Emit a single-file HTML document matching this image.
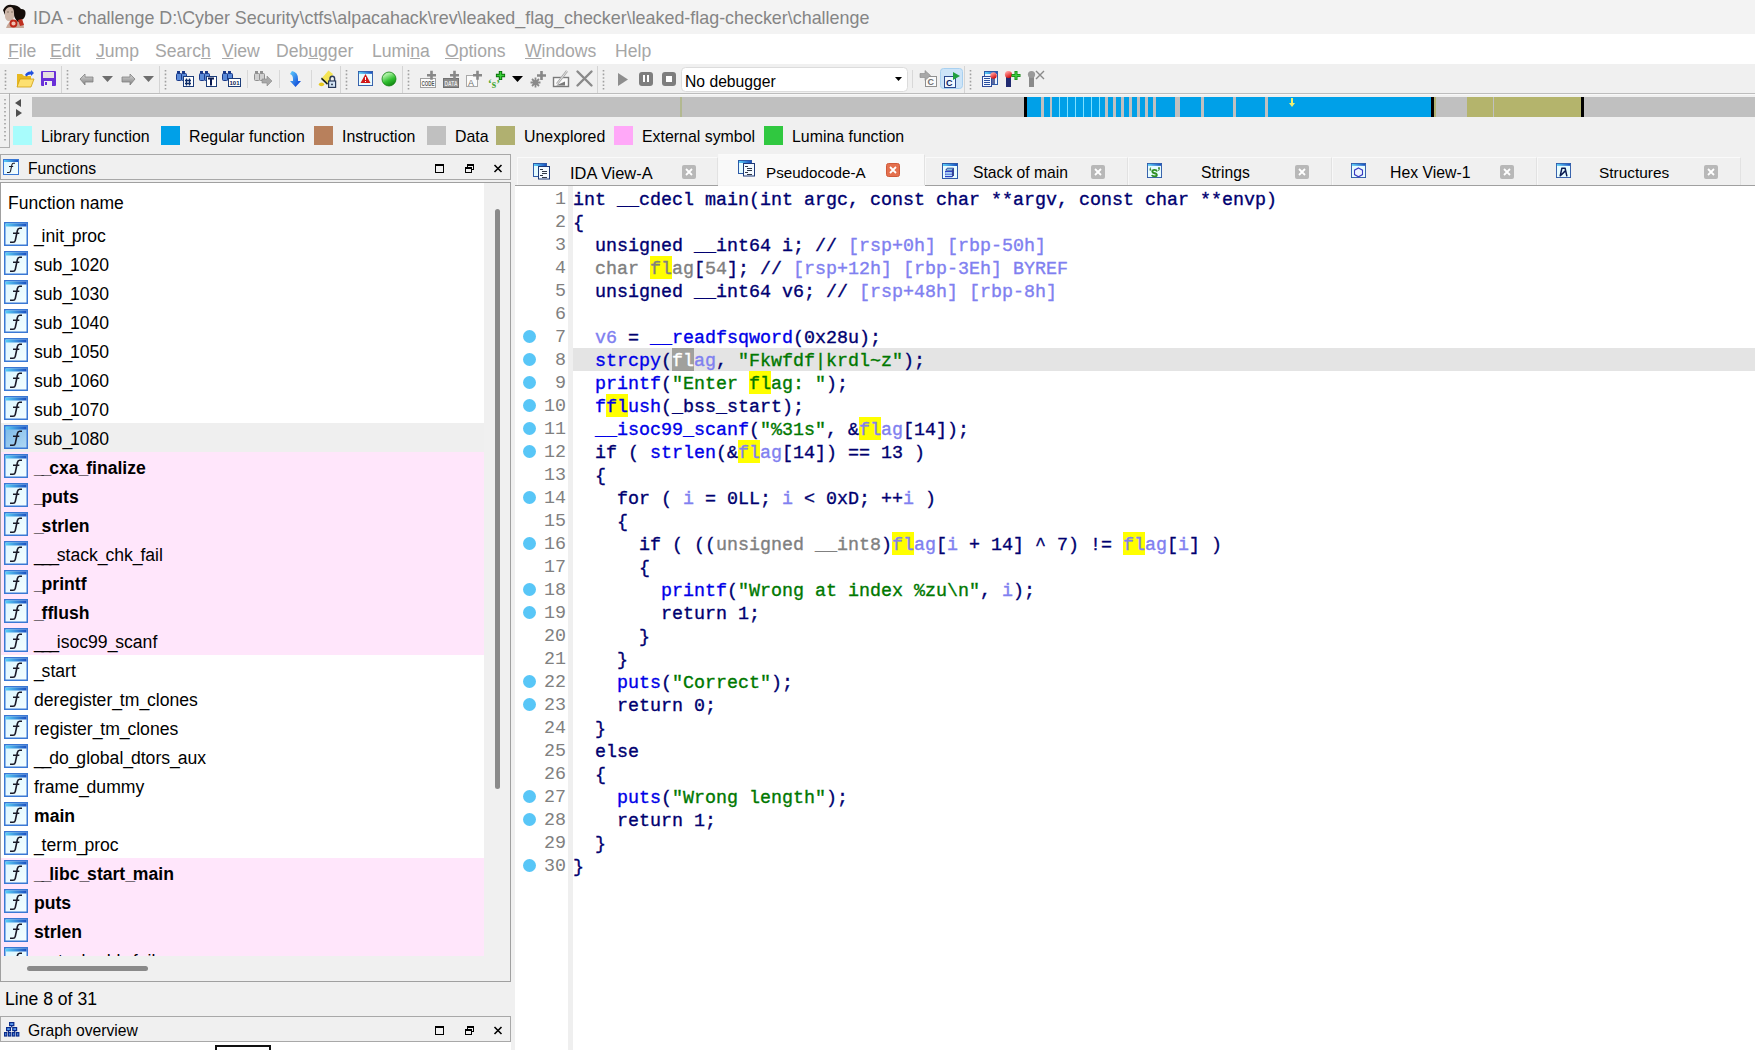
<!DOCTYPE html><html><head><meta charset="utf-8"><style>
*{margin:0;padding:0;box-sizing:border-box}
html,body{width:1755px;height:1050px;overflow:hidden;background:#f0f0f0;font-family:"Liberation Sans",sans-serif;color:#000}
.a{position:absolute}
.t{position:absolute;white-space:pre;line-height:1}
.mi{position:absolute;top:43px;font-size:17.6px;color:#a6a6a6;white-space:pre;line-height:17px}
.mi u{text-decoration:underline;text-decoration-color:#a8a8a8;text-underline-offset:0.5px}
.code{position:absolute;left:573px;font-family:"Liberation Mono",monospace;font-size:18.333px;white-space:pre;line-height:23px;color:#000070;-webkit-text-stroke:0.35px currentColor}
.ln{position:absolute;left:515px;width:51px;text-align:right;font-family:"Liberation Mono",monospace;font-size:18.333px;white-space:pre;line-height:23px;color:#808080}
.dot{position:absolute;left:523px;width:13px;height:13px;border-radius:50%;background:#58c6f7}
.b{color:#0000e8}.g{color:#007800}.l{color:#8080f0}.y{color:#808080}
.hg{color:#fff}
.fr{position:absolute;left:0;width:484px;height:29px}
.fn i{font-style:normal;letter-spacing:-2.2px}
.fn{position:absolute;left:33px;top:2px;font-size:17.6px;white-space:pre;line-height:29px;color:#000}
.fi{position:absolute;left:3px;top:2px;width:24px;height:24px}
.sw{position:absolute;top:126px;width:19px;height:19px}
.lg{position:absolute;top:129px;font-size:15.9px;line-height:16px;white-space:pre;color:#000}
.tab{position:absolute;top:165px;font-size:16px;line-height:16px;white-space:pre;color:#000}
.cb{position:absolute;width:14px;height:14px;border-radius:2px;background:#b4b4b4}
</style></head><body>
<svg width="0" height="0" style="position:absolute"><defs>
<linearGradient id="fig" x1="0" y1="0" x2="1" y2="1"><stop offset="0" stop-color="#dcf6ff"/><stop offset="1" stop-color="#f4feff"/></linearGradient>
<linearGradient id="figs" x1="0" y1="0" x2="1" y2="1"><stop offset="0" stop-color="#7ab8e8"/><stop offset="1" stop-color="#b0d8f4"/></linearGradient>
<linearGradient id="wtop" x1="0" y1="0" x2="1" y2="0"><stop offset="0" stop-color="#5ad0f8"/><stop offset="1" stop-color="#1a50c0"/></linearGradient>
<linearGradient id="gball" x1="0.3" y1="0.2" x2="0.7" y2="1"><stop offset="0" stop-color="#a8f0a0"/><stop offset="0.5" stop-color="#30c030"/><stop offset="1" stop-color="#108010"/></linearGradient>
<linearGradient id="garr" x1="0" y1="0" x2="0" y2="1"><stop offset="0" stop-color="#d8d8d8"/><stop offset="1" stop-color="#808080"/></linearGradient>
<linearGradient id="barr" x1="0" y1="0" x2="1" y2="1"><stop offset="0" stop-color="#60d0ff"/><stop offset="1" stop-color="#0030d0"/></linearGradient>
<linearGradient id="rpin" x1="0.3" y1="0.2" x2="0.7" y2="1"><stop offset="0" stop-color="#ff9090"/><stop offset="1" stop-color="#d00000"/></linearGradient>
<symbol id="ficon" viewBox="0 0 24 24"><rect x="0.75" y="0.75" width="22.5" height="22.5" fill="url(#fig)" stroke="#3a78d4" stroke-width="1.5"/><rect x="1.5" y="1.5" width="21" height="3" fill="url(#wtop)"/><path d="M18 6.3H15.6Q13.9 6.3 13.4 8.5L11.3 18.3Q10.9 20.2 9 20.2H6M9 11.3H15.3" fill="none" stroke="#1a1a28" stroke-width="1.6"/></symbol>
<symbol id="ficons" viewBox="0 0 24 24"><rect x="0.75" y="0.75" width="22.5" height="22.5" fill="url(#figs)" stroke="#3a78d4" stroke-width="1.5"/><rect x="1.5" y="1.5" width="21" height="3" fill="url(#wtop)"/><path d="M18 6.3H15.6Q13.9 6.3 13.4 8.5L11.3 18.3Q10.9 20.2 9 20.2H6M9 11.3H15.3" fill="none" stroke="#1a1a28" stroke-width="1.6"/></symbol>
<symbol id="win" viewBox="0 0 16 16"><rect x="0.5" y="0.5" width="15" height="15" fill="#e8fcff" stroke="#2e5aa8"/><rect x="1" y="1" width="14" height="2" fill="url(#wtop)"/></symbol>
<symbol id="grip" viewBox="0 0 4 22"><path d="M1.5 1v20" stroke="#a0a0a0" stroke-width="1.6" stroke-dasharray="1.6 2"/></symbol>
</defs></svg>
<div class="a" style="left:0;top:0;width:1755px;height:34px;background:#f3f3f3"></div>
<div class="t" style="left:33px;top:9.5px;font-size:17.9px;color:#858585">IDA - challenge D:\Cyber Security\ctfs\alpacahack\rev\leaked_flag_checker\leaked-flag-checker\challenge</div>
<svg class="a" style="left:0;top:0" width="34" height="34" viewBox="0 0 34 34">
<path d="M6 28 Q9 20 14 20 L22 20 Q24 24 24 28Z" fill="#c8a898"/>
<path d="M3 10 Q6 4 12 5 Q18 5 21 9 Q26 9 25.5 14 Q25 19 21 20 L18 22 Q14 18 13 12 Q10 9 5 15Z" fill="#140c08"/>
<path d="M5 11 Q7 6.5 11 7 Q14 8 14 13 Q15 19 11 21 Q6 22 5 17Z" fill="#cdb6a8"/>
<path d="M7 12h2M11 12h2" stroke="#8a7868" stroke-width="1"/>
<circle cx="13.5" cy="23.5" r="3" fill="#f0c0b0" stroke="#c02818" stroke-width="1.8"/>
<path d="M18 20 L22 19 L24 25 L20 26Z" fill="#c03020"/>
</svg>
<div class="a" style="left:0;top:34px;width:1755px;height:30px;background:#fff"></div>
<div class="mi" style="left:8px"><u>F</u>ile</div>
<div class="mi" style="left:50px"><u>E</u>dit</div>
<div class="mi" style="left:96px"><u>J</u>ump</div>
<div class="mi" style="left:155px">Searc<u>h</u></div>
<div class="mi" style="left:222px"><u>V</u>iew</div>
<div class="mi" style="left:276px">Deb<u>u</u>gger</div>
<div class="mi" style="left:372px">Lumi<u>n</u>a</div>
<div class="mi" style="left:445px"><u>O</u>ptions</div>
<div class="mi" style="left:525px"><u>W</u>indows</div>
<div class="mi" style="left:615px">Help</div>
<div class="a" style="left:0;top:64px;width:1755px;height:29px;background:#f0f0f0"></div>
<div class="a" style="left:0;top:93px;width:1755px;height:1px;background:#bdbdbd"></div><div class="a" style="left:0;top:94px;width:1755px;height:1px;background:#f8f8f8"></div>
<svg class="a" style="left:0;top:64px" width="1755" height="29" viewBox="0 0 1755 29"><rect x="61" y="2" width="1" height="27" fill="#d4d4d4"/><rect x="159" y="2" width="1" height="27" fill="#d4d4d4"/><rect x="340" y="2" width="1" height="27" fill="#d4d4d4"/><rect x="402" y="2" width="1" height="27" fill="#d4d4d4"/><rect x="597" y="2" width="1" height="27" fill="#d4d4d4"/><rect x="964" y="2" width="1" height="27" fill="#d4d4d4"/><use href="#grip" x="4" y="5" width="4" height="22"/><use href="#grip" x="66" y="5" width="4" height="22"/><use href="#grip" x="164" y="5" width="4" height="22"/><use href="#grip" x="345" y="5" width="4" height="22"/><use href="#grip" x="407" y="5" width="4" height="22"/><use href="#grip" x="602" y="5" width="4" height="22"/><use href="#grip" x="969" y="5" width="4" height="22"/><path d="M17 10h5l2 2h7v11H17z" fill="#e8b820"/><path d="M17 23l3-8h14l-3 8z" fill="#fde070" stroke="#d0a010" stroke-width="0.8"/><path d="M25 11q2-4 6-3.5v-1.5l3 3-3 3v-1.5q-3-.3-4.5 2z" fill="#2050e0"/><rect x="41" y="7" width="15" height="15" rx="1" fill="#6a30d8"/><rect x="43" y="8" width="11" height="6" fill="#e6e0e0"/><rect x="44" y="17" width="8" height="5" fill="#f0f0f0"/><rect x="45" y="18" width="2" height="3" fill="#6a30d8"/><path d="M80 15l5-5v3h8v5h-8v3z" fill="url(#garr)" stroke="#808080" stroke-width="0.8"/><path d="M102 12h11l-5.5 6z" fill="#6e6e6e"/><path d="M135 15l-5-5v3h-8v5h8v3z" fill="url(#garr)" stroke="#808080" stroke-width="0.8"/><path d="M143 12h11l-5.5 6z" fill="#6e6e6e"/><rect x="177" y="7" width="3" height="3" fill="#1a3a8a"/><rect x="182" y="7" width="3" height="3" fill="#1a3a8a"/><rect x="176.5" y="9.5" width="5" height="7" rx="1" fill="#5a8ad8" stroke="#1a3a8a"/><rect x="181.5" y="9.5" width="5" height="7" rx="1" fill="#5a8ad8" stroke="#1a3a8a"/><rect x="183.5" y="12.5" width="10" height="10" fill="#fff" stroke="#1c3c78"/><path d="M186.5 14.5v7M189.5 14.5v7M185 16.5h6M185 19.5h6" stroke="#0c2c68" stroke-width="1.3"/><rect x="200" y="7" width="3" height="3" fill="#1a3a8a"/><rect x="205" y="7" width="3" height="3" fill="#1a3a8a"/><rect x="199.5" y="9.5" width="5" height="7" rx="1" fill="#5a8ad8" stroke="#1a3a8a"/><rect x="204.5" y="9.5" width="5" height="7" rx="1" fill="#5a8ad8" stroke="#1a3a8a"/><rect x="206.5" y="12.5" width="10" height="10" fill="#fff" stroke="#1c3c78"/><path d="M208 14.5h6M211 14.5v7" stroke="#0a1a50" stroke-width="2"/><rect x="223" y="7" width="3" height="3" fill="#1a3a8a"/><rect x="228" y="7" width="3" height="3" fill="#1a3a8a"/><rect x="222.5" y="9.5" width="5" height="7" rx="1" fill="#5a8ad8" stroke="#1a3a8a"/><rect x="227.5" y="9.5" width="5" height="7" rx="1" fill="#5a8ad8" stroke="#1a3a8a"/><rect x="228.5" y="14.5" width="12" height="8" fill="#fff" stroke="#1c3c78"/><text x="229.5" y="21" font-size="6" font-weight="bold" fill="#0a1a50" font-family="Liberation Sans">101</text><rect x="247" y="6" width="1" height="18" fill="#d8d8d8"/><rect x="255" y="7" width="3" height="3" fill="#909090"/><rect x="260" y="7" width="3" height="3" fill="#909090"/><rect x="254.5" y="9.5" width="5" height="7" rx="1" fill="#d0d0d0" stroke="#909090"/><rect x="259.5" y="9.5" width="5" height="7" rx="1" fill="#d0d0d0" stroke="#909090"/><path d="M262 15h5v-3l5 5-5 5v-3h-5z" fill="#a8a8a8" stroke="#888" stroke-width="0.6"/><rect x="279" y="6" width="1" height="18" fill="#d8d8d8"/><path d="M292 7q6 1 6 8v2h3l-5.5 6-5.5-6h3v-2q0-4-3-5z" fill="url(#barr)"/><rect x="311" y="6" width="1" height="18" fill="#d8d8d8"/><path d="M322 14L328.5 6.5L333 10L328 20Z" fill="#f4e454"/><path d="M321.8 13.6L328 19.6L327 20.8L321 15Z" fill="#142014"/><ellipse cx="321.5" cy="20.3" rx="2.6" ry="1.9" fill="#e8c81c"/><path d="M330 17.2v-2.6a2.3 2.3 0 0 1 4.6 0v2.6" fill="none" stroke="#2a3a5a" stroke-width="1.4"/><rect x="328.6" y="17" width="7" height="6.4" fill="#d4e4f4" stroke="#2a3a5a" stroke-width="1.2"/><circle cx="332" cy="20.4" r="0.9" fill="#1a2a40"/><use href="#win" x="358" y="7" width="15" height="15"/><path d="M365.5 10l5 9h-10z" fill="#d01818"/><rect x="365" y="13" width="1" height="3" fill="#fff"/><rect x="365" y="17" width="1" height="1" fill="#fff"/><circle cx="389" cy="15" r="7" fill="url(#gball)" stroke="#108010" stroke-width="0.8"/><rect x="420.5" y="14.5" width="15" height="9" fill="#fbfbfb" stroke="#a0a0a0"/><text x="421.5" y="22" font-size="7.5" fill="#585858" font-family="Liberation Sans" font-weight="bold" textLength="13" lengthAdjust="spacingAndGlyphs">CODE</text><path d="M431.5 6.800000000000001v9.0M427.0 11.3h9.0" stroke="#888888" stroke-width="2.6"/><rect x="443.5" y="14.5" width="15" height="9" fill="#8a8a8a" stroke="#707070"/><text x="444.5" y="22" font-size="7.5" fill="#e8e8e8" font-family="Liberation Sans" font-weight="bold" textLength="13" lengthAdjust="spacingAndGlyphs">DATA</text><path d="M454.5 6.800000000000001v9.0M450.0 11.3h9.0" stroke="#888888" stroke-width="2.6"/><rect x="466.5" y="11.5" width="11" height="11" fill="#fbfbfb" stroke="#a8a8a8"/><text x="468" y="21.5" font-size="9" fill="#707070" font-family="Liberation Sans">A</text><path d="M477.5 6.800000000000001v9.0M473.0 11.3h9.0" stroke="#888888" stroke-width="2.6"/><text x="488" y="23.5" font-size="12" fill="#48a838" font-family="Liberation Serif" font-weight="bold" textLength="12" lengthAdjust="spacingAndGlyphs">‘s’</text><path d="M500.5 6.9v9.2M495.9 11.5h9.2" stroke="#0a6a0a" stroke-width="3.4"/><path d="M500.5 7.7v7.6M496.7 11.5h7.6" stroke="#38d038" stroke-width="1.6"/><path d="M512 12h11l-5.5 6z" fill="#000"/><path d="M535.5 13.5v10M530.5 18.5h10M532 15l7 7M539 15l-7 7" stroke="#8a8a8a" stroke-width="1.8"/><path d="M541.5 7.0v9.0M537.0 11.5h9.0" stroke="#888888" stroke-width="2.6"/><rect x="553.5" y="13.5" width="15" height="9" fill="#fbfbfb" stroke="#7a7a7a" stroke-width="1.4"/><path d="M556 21.5l9-4v4z" fill="#7a7a7a"/><path d="M557 20l10-13" stroke="#a8a8a8" stroke-width="2.4"/><path d="M557 20l10-13" stroke="#f0f0f0" stroke-width="0.8"/><path d="M577.5 7.5l14 14M591.5 7.5l-14 14" stroke="#8a8a8a" stroke-width="2.4" stroke-linecap="round"/><path d="M618 9l10 6.5-10 6.5z" fill="#8e8e8e"/><rect x="639" y="8" width="14" height="14" rx="3" fill="#7e7e7e"/><rect x="643" y="11" width="2" height="7" fill="#fff"/><rect x="647" y="11" width="2" height="7" fill="#fff"/><rect x="662" y="8" width="14" height="14" rx="3" fill="#7e7e7e"/><rect x="666" y="12" width="6" height="6" fill="#fff"/><rect x="681.5" y="3.5" width="226" height="24" rx="4" fill="#fff" stroke="#dcdcdc"/><path d="M895 13h7l-3.5 4z" fill="#000"/><rect x="912" y="6" width="1" height="18" fill="#d8d8d8"/><rect x="925.5" y="12.5" width="11" height="10" fill="#fafafa" stroke="#909090"/><text x="927.5" y="21" font-size="9" font-weight="bold" fill="#707070" font-family="Liberation Sans">C</text><path d="M920 9.5h5v-3l5.5 5-5.5 5v-3h-5z" fill="#a8a8a8" stroke="#888" stroke-width="0.6"/><rect x="940.5" y="4.5" width="22" height="20" rx="3" fill="#cce4f8" stroke="#a8d0f0"/><rect x="944.5" y="12.5" width="11" height="11" fill="#f0f8ff" stroke="#2a4a90"/><text x="946" y="21.5" font-size="9" font-weight="bold" fill="#0a1a60" font-family="Liberation Sans">C</text><path d="M953 8v8l7-4z" fill="#20a040"/><rect x="984.5" y="7.5" width="13" height="13" fill="#e8f4ff" stroke="#2e5aa8"/><rect x="985" y="8" width="12" height="2" fill="url(#wtop)"/><rect x="982.5" y="12.5" width="9" height="10" fill="#f4f8ff" stroke="#2e4a98"/><path d="M984 14.5h6M984 16.5h6M984 18.5h6M984 20.5h6" stroke="#2a50a0"/><rect x="992" y="13" width="3" height="7" fill="#5a6aa0"/><circle cx="993.5" cy="11.5" r="3.2" fill="url(#rpin)"/><rect x="1006" y="12" width="5" height="11" fill="#202a70"/><circle cx="1008.5" cy="10.5" r="3.6" fill="url(#rpin)"/><path d="M1016 7v9M1011.5 11.5h9" stroke="#108010" stroke-width="3"/><path d="M1016 7.5v8M1012 11.5h8" stroke="#40d040" stroke-width="1.4"/><rect x="1029" y="12" width="5" height="11" fill="#8a8a8a"/><circle cx="1031.5" cy="10.5" r="3.6" fill="#9a9a9a"/><path d="M1036 7l8 8M1044 7l-8 8" stroke="#8a8a8a" stroke-width="1.4"/></svg>
<div class="t" style="left:685px;top:73.5px;font-size:15.7px;color:#000">No debugger</div>
<div class="a" style="left:0;top:93px;width:10px;height:55px;border-right:1px solid #b0b0b0;border-bottom:1px solid #b0b0b0"></div>
<svg class="a" style="left:0;top:93px" width="32" height="55" viewBox="0 0 32 55"><path d="M5 6v42" stroke="#a0a0a0" stroke-width="1.6" stroke-dasharray="1.6 2.4"/><path d="M15 10l6-4v8z" fill="#505050"/><path d="M16 16l6 4-6 4z" fill="#505050"/></svg>
<svg class="a" style="left:32px;top:97px" width="1723" height="20" viewBox="0 0 1723 20"><rect x="0" y="0" width="1723" height="20" fill="#c0c0c0"/><rect x="648" y="0" width="2" height="20" fill="#b2b890"/><rect x="992" y="0" width="3" height="20" fill="#000"/><rect x="995" y="0" width="14" height="20" fill="#00a0e8"/><rect x="1012" y="0" width="6" height="20" fill="#00a0e8"/><rect x="1020" y="0" width="53" height="20" fill="#00a0e8"/><rect x="1027" y="0" width="1" height="20" fill="#7ee0ff"/><rect x="1035" y="0" width="1" height="20" fill="#7ee0ff"/><rect x="1043" y="0" width="1" height="20" fill="#7ee0ff"/><rect x="1051" y="0" width="1" height="20" fill="#7ee0ff"/><rect x="1059" y="0" width="1" height="20" fill="#7ee0ff"/><rect x="1067" y="0" width="1" height="20" fill="#7ee0ff"/><rect x="1076" y="0" width="5" height="20" fill="#00a0e8"/><rect x="1084" y="0" width="5" height="20" fill="#00a0e8"/><rect x="1092" y="0" width="5" height="20" fill="#00a0e8"/><rect x="1100" y="0" width="5" height="20" fill="#00a0e8"/><rect x="1108" y="0" width="5" height="20" fill="#00a0e8"/><rect x="1116" y="0" width="5" height="20" fill="#00a0e8"/><rect x="1124" y="0" width="19" height="20" fill="#00a0e8"/><rect x="1148" y="0" width="21" height="20" fill="#00a0e8"/><rect x="1172" y="0" width="29" height="20" fill="#00a0e8"/><rect x="1204" y="0" width="29" height="20" fill="#00a0e8"/><rect x="1236" y="0" width="163" height="20" fill="#00a0e8"/><rect x="1399" y="0" width="3" height="20" fill="#000"/><rect x="1402" y="0" width="2" height="20" fill="#b0b070"/><rect x="1435" y="0" width="26" height="20" fill="#b4b46c"/><rect x="1462" y="0" width="87" height="20" fill="#b4b46c"/><rect x="1549" y="0" width="3" height="20" fill="#000"/><path d="M1259 1h2v5h2l-3 4-3-4h2z" fill="#f0f070"/></svg>
<div class="sw" style="left:13px;background:#a8fcfc"></div><div class="lg" style="left:41px">Library function</div>
<div class="sw" style="left:161px;background:#00a0e8"></div><div class="lg" style="left:189px">Regular function</div>
<div class="sw" style="left:314px;background:#b8805c"></div><div class="lg" style="left:342px">Instruction</div>
<div class="sw" style="left:427px;background:#c0c0c0"></div><div class="lg" style="left:455px">Data</div>
<div class="sw" style="left:496px;background:#b0b070"></div><div class="lg" style="left:524px">Unexplored</div>
<div class="sw" style="left:614px;background:#ffa8f8"></div><div class="lg" style="left:642px">External symbol</div>
<div class="sw" style="left:764px;background:#30c840"></div><div class="lg" style="left:792px">Lumina function</div>
<div class="a" style="left:0;top:154px;width:511px;height:26px;border:1px solid #a8a8a8;background:#f0f0f0"></div>
<div class="t" style="left:28px;top:161px;font-size:15.7px">Functions</div>
<svg class="a" style="left:3px;top:159px" width="16" height="16" viewBox="0 0 24 24"><use href="#ficon"/></svg>
<svg class="a" style="left:430px;top:154px" width="80" height="26" viewBox="0 0 80 26"><rect x="5.5" y="10.5" width="8" height="8" fill="none" stroke="#000"/><rect x="5" y="10" width="9" height="2" fill="#000"/><rect x="37.5" y="10.5" width="6" height="5" fill="none" stroke="#000"/><rect x="37" y="10" width="7" height="2" fill="#000"/><rect x="35.5" y="13.5" width="6" height="5" fill="#f0f0f0" stroke="#000"/><rect x="35" y="13" width="7" height="2" fill="#000"/><path d="M64.5 11l7 7M71.5 11l-7 7" stroke="#000" stroke-width="1.6"/></svg>
<div class="a" style="left:0;top:182px;width:511px;height:800px;border:1px solid #a0a0a0;background:#f0f0f0"></div>
<div class="a" style="left:1px;top:183px;width:483px;height:773px;background:#fff;overflow:hidden" id="flist">
<div class="t" style="left:7px;top:12px;font-size:17.5px">Function name</div>
<div class="fr" style="top:37px;background:#fff"><svg class="fi" viewBox="0 0 24 24"><use href="#ficon"/></svg><div class="fn" style=""><i>_</i>init<i>_</i>proc</div></div>
<div class="fr" style="top:66px;background:#fff"><svg class="fi" viewBox="0 0 24 24"><use href="#ficon"/></svg><div class="fn" style="">sub<i>_</i>1020</div></div>
<div class="fr" style="top:95px;background:#fff"><svg class="fi" viewBox="0 0 24 24"><use href="#ficon"/></svg><div class="fn" style="">sub<i>_</i>1030</div></div>
<div class="fr" style="top:124px;background:#fff"><svg class="fi" viewBox="0 0 24 24"><use href="#ficon"/></svg><div class="fn" style="">sub<i>_</i>1040</div></div>
<div class="fr" style="top:153px;background:#fff"><svg class="fi" viewBox="0 0 24 24"><use href="#ficon"/></svg><div class="fn" style="">sub<i>_</i>1050</div></div>
<div class="fr" style="top:182px;background:#fff"><svg class="fi" viewBox="0 0 24 24"><use href="#ficon"/></svg><div class="fn" style="">sub<i>_</i>1060</div></div>
<div class="fr" style="top:211px;background:#fff"><svg class="fi" viewBox="0 0 24 24"><use href="#ficon"/></svg><div class="fn" style="">sub<i>_</i>1070</div></div>
<div class="fr" style="top:240px;background:#efefef"><svg class="fi" viewBox="0 0 24 24"><use href="#ficons"/></svg><div class="fn" style="">sub<i>_</i>1080</div></div>
<div class="fr" style="top:269px;background:#ffe6fb"><svg class="fi" viewBox="0 0 24 24"><use href="#ficon"/></svg><div class="fn" style="font-weight:bold;"><i>_</i><i>_</i>cxa<i>_</i>finalize</div></div>
<div class="fr" style="top:298px;background:#ffe6fb"><svg class="fi" viewBox="0 0 24 24"><use href="#ficon"/></svg><div class="fn" style="font-weight:bold;"><i>_</i>puts</div></div>
<div class="fr" style="top:327px;background:#ffe6fb"><svg class="fi" viewBox="0 0 24 24"><use href="#ficon"/></svg><div class="fn" style="font-weight:bold;"><i>_</i>strlen</div></div>
<div class="fr" style="top:356px;background:#ffe6fb"><svg class="fi" viewBox="0 0 24 24"><use href="#ficon"/></svg><div class="fn" style=""><i>_</i><i>_</i><i>_</i>stack<i>_</i>chk<i>_</i>fail</div></div>
<div class="fr" style="top:385px;background:#ffe6fb"><svg class="fi" viewBox="0 0 24 24"><use href="#ficon"/></svg><div class="fn" style="font-weight:bold;"><i>_</i>printf</div></div>
<div class="fr" style="top:414px;background:#ffe6fb"><svg class="fi" viewBox="0 0 24 24"><use href="#ficon"/></svg><div class="fn" style="font-weight:bold;"><i>_</i>fflush</div></div>
<div class="fr" style="top:443px;background:#ffe6fb"><svg class="fi" viewBox="0 0 24 24"><use href="#ficon"/></svg><div class="fn" style=""><i>_</i><i>_</i><i>_</i>isoc99<i>_</i>scanf</div></div>
<div class="fr" style="top:472px;background:#fff"><svg class="fi" viewBox="0 0 24 24"><use href="#ficon"/></svg><div class="fn" style=""><i>_</i>start</div></div>
<div class="fr" style="top:501px;background:#fff"><svg class="fi" viewBox="0 0 24 24"><use href="#ficon"/></svg><div class="fn" style="">deregister<i>_</i>tm<i>_</i>clones</div></div>
<div class="fr" style="top:530px;background:#fff"><svg class="fi" viewBox="0 0 24 24"><use href="#ficon"/></svg><div class="fn" style="">register<i>_</i>tm<i>_</i>clones</div></div>
<div class="fr" style="top:559px;background:#fff"><svg class="fi" viewBox="0 0 24 24"><use href="#ficon"/></svg><div class="fn" style=""><i>_</i><i>_</i>do<i>_</i>global<i>_</i>dtors<i>_</i>aux</div></div>
<div class="fr" style="top:588px;background:#fff"><svg class="fi" viewBox="0 0 24 24"><use href="#ficon"/></svg><div class="fn" style="">frame<i>_</i>dummy</div></div>
<div class="fr" style="top:617px;background:#fff"><svg class="fi" viewBox="0 0 24 24"><use href="#ficon"/></svg><div class="fn" style="font-weight:bold;">main</div></div>
<div class="fr" style="top:646px;background:#fff"><svg class="fi" viewBox="0 0 24 24"><use href="#ficon"/></svg><div class="fn" style=""><i>_</i>term<i>_</i>proc</div></div>
<div class="fr" style="top:675px;background:#ffe6fb"><svg class="fi" viewBox="0 0 24 24"><use href="#ficon"/></svg><div class="fn" style="font-weight:bold;"><i>_</i><i>_</i>libc<i>_</i>start<i>_</i>main</div></div>
<div class="fr" style="top:704px;background:#ffe6fb"><svg class="fi" viewBox="0 0 24 24"><use href="#ficon"/></svg><div class="fn" style="font-weight:bold;">puts</div></div>
<div class="fr" style="top:733px;background:#ffe6fb"><svg class="fi" viewBox="0 0 24 24"><use href="#ficon"/></svg><div class="fn" style="font-weight:bold;">strlen</div></div>
<div class="fr" style="top:762px;background:#ffe6fb"><svg class="fi" viewBox="0 0 24 24"><use href="#ficon"/></svg><div class="fn" style=""><i>_</i><i>_</i>stack<i>_</i>chk<i>_</i>fail</div></div>
</div>
<div class="a" style="left:495px;top:209px;width:5px;height:580px;border-radius:3px;background:#8a8a8a"></div>
<div class="a" style="left:27px;top:966px;width:121px;height:5px;border-radius:3px;background:#8a8a8a"></div>
<div class="t" style="left:5px;top:991px;font-size:17.6px">Line 8 of 31</div>
<div class="a" style="left:0;top:1016px;width:511px;height:26px;border:1px solid #a8a8a8;background:#f0f0f0"></div>
<div class="t" style="left:28px;top:1023px;font-size:15.7px">Graph overview</div>
<svg class="a" style="left:4px;top:1021px" width="16" height="16" viewBox="0 0 16 16"><g fill="#5a9af0" stroke="#0a2a88" stroke-width="1.2"><rect x="5.6" y="1.6" width="4.2" height="3"/><rect x="2.6" y="6.6" width="3.8" height="3"/><rect x="8.8" y="6.6" width="3.8" height="3"/><rect x="0.6" y="11.6" width="2.2" height="3.4"/><rect x="4.6" y="11.6" width="2.2" height="3.4"/><rect x="8.6" y="11.6" width="2.2" height="3.4"/><rect x="12.6" y="11.6" width="2.2" height="3.4"/></g><path d="M7.7 4.6v2M4.5 9.6v2M10.7 9.6v2" stroke="#0a2a88" stroke-width="1.2"/></svg>
<svg class="a" style="left:430px;top:1016px" width="80" height="26" viewBox="0 0 80 26"><rect x="5.5" y="10.5" width="8" height="8" fill="none" stroke="#000"/><rect x="5" y="10" width="9" height="2" fill="#000"/><rect x="37.5" y="10.5" width="6" height="5" fill="none" stroke="#000"/><rect x="37" y="10" width="7" height="2" fill="#000"/><rect x="35.5" y="13.5" width="6" height="5" fill="#f0f0f0" stroke="#000"/><rect x="35" y="13" width="7" height="2" fill="#000"/><path d="M64.5 11l7 7M71.5 11l-7 7" stroke="#000" stroke-width="1.6"/></svg>
<div class="a" style="left:0;top:1042px;width:511px;height:8px;background:#fff"></div>
<div class="a" style="left:215px;top:1045px;width:56px;height:10px;border:2px solid #111"></div>
<div class="a" style="left:515px;top:185px;width:1240px;height:865px;background:#fff;border-top:1px solid #a0a0a0"></div>
<div class="a" style="left:568px;top:186px;width:5px;height:864px;background:#efefef"></div>
<div class="a" style="left:1741px;top:157px;width:14px;height:28px;background:#f0f0f0"></div>
<div class="a" style="left:517px;top:157px;width:201px;height:28px;background:#f0f0f0;border-top:1px solid #fafafa;border-left:1px solid #f8f8f8;border-right:1px solid #e2e2e2"></div>
<div class="tab" style="left:570px;font-size:16.4px">IDA View-A</div>
<svg class="a" style="left:533px;top:163px" width="17" height="17" viewBox="0 0 17 17"><rect x="0.5" y="0.5" width="13" height="13" fill="#e4fbff" stroke="#2e5aa8"/><rect x="1" y="1" width="12" height="2" fill="url(#wtop)"/><rect x="5.5" y="3.5" width="11" height="12.5" fill="#f4faff" stroke="#1e3a78"/><path d="M7 6.5h3M9 8.5h5M9 10.5h5M7 12.5h3M9 14.5h5" stroke="#303848" stroke-width="1"/></svg>
<svg class="a" style="left:682px;top:165px" width="14" height="14" viewBox="0 0 14 14"><rect x="0" y="0" width="14" height="14" rx="2" fill="#b8b8b8"/><path d="M4 4l6 6M10 4l-6 6" stroke="#fff" stroke-width="1.8"/></svg>
<div class="a" style="left:718px;top:154px;width:207px;height:31px;background:#f9f9f9;border-top:1px solid #fafafa;border-left:1px solid #f8f8f8;border-right:1px solid #e2e2e2"></div>
<div class="tab" style="left:766px;font-size:15.2px">Pseudocode-A</div>
<svg class="a" style="left:738px;top:160px" width="17" height="17" viewBox="0 0 17 17"><rect x="0.5" y="0.5" width="13" height="13" fill="#e4fbff" stroke="#2e5aa8"/><rect x="1" y="1" width="12" height="2" fill="url(#wtop)"/><rect x="5.5" y="3.5" width="11" height="12.5" fill="#f4faff" stroke="#1e3a78"/><path d="M7 6.5h3M9 8.5h5M9 10.5h5M7 12.5h3M9 14.5h5" stroke="#303848" stroke-width="1"/></svg>
<svg class="a" style="left:886px;top:163px" width="14" height="14" viewBox="0 0 14 14"><rect x="0.5" y="0.5" width="13" height="13" rx="2" fill="#e4704e" stroke="#d05a3a"/><path d="M4 4l6 6M10 4l-6 6" stroke="#fff" stroke-width="1.8"/></svg>
<div class="a" style="left:925px;top:157px;width:203px;height:28px;background:#f0f0f0;border-top:1px solid #fafafa;border-left:1px solid #f8f8f8;border-right:1px solid #e2e2e2"></div>
<div class="tab" style="left:973px;font-size:15.7px">Stack of main</div>
<svg class="a" style="left:942px;top:163px" width="16" height="16" viewBox="0 0 16 16"><use href="#win" width="16" height="16"/><path d="M5.2 5.2H11.6L10.2 7.2H3.8Z" fill="#a8f4ff" stroke="#0a1a80" stroke-width="0.8"/><path d="M3 8h7.2v1.4H3zM3 10.4h7.2v1.4H3zM3 12.8h7.2v1.4H3z" fill="#2a40c8"/><path d="M4 9.9h5.6M4 12.3h5.6" stroke="#b8f0ff" stroke-width="1"/><path d="M10.2 7.2L11.8 5.4V12.6L10.2 14.2Z" fill="#0a1a80"/></svg>
<svg class="a" style="left:1091px;top:165px" width="14" height="14" viewBox="0 0 14 14"><rect x="0" y="0" width="14" height="14" rx="2" fill="#b8b8b8"/><path d="M4 4l6 6M10 4l-6 6" stroke="#fff" stroke-width="1.8"/></svg>
<div class="a" style="left:1128px;top:157px;width:204px;height:28px;background:#f0f0f0;border-top:1px solid #fafafa;border-left:1px solid #f8f8f8;border-right:1px solid #e2e2e2"></div>
<div class="tab" style="left:1201px;font-size:15.7px">Strings</div>
<svg class="a" style="left:1147px;top:163px" width="16" height="16" viewBox="0 0 16 16"><use href="#win" width="15" height="15"/><path d="M3.8 4.2q-1.6.8-1.2 3.4h1.6v-1.4h-.6q0-1 .6-1.4zM11.2 4.2h1.6v1.6q0 1.8-1.6 2.2l-.3-.5q.9-.5.9-1.3h-.6z" fill="#2a7a20"/><path d="M10 8.4Q9.6 6.9 7.5 6.9Q5.3 6.9 5.3 8.6Q5.3 9.8 7.5 10.2Q9.8 10.6 9.8 12Q9.8 13.4 7.5 13.4Q5.4 13.4 4.9 12" fill="none" stroke="#2f8f22" stroke-width="1.9"/></svg>
<svg class="a" style="left:1295px;top:165px" width="14" height="14" viewBox="0 0 14 14"><rect x="0" y="0" width="14" height="14" rx="2" fill="#b8b8b8"/><path d="M4 4l6 6M10 4l-6 6" stroke="#fff" stroke-width="1.8"/></svg>
<div class="a" style="left:1332px;top:157px;width:205px;height:28px;background:#f0f0f0;border-top:1px solid #fafafa;border-left:1px solid #f8f8f8;border-right:1px solid #e2e2e2"></div>
<div class="tab" style="left:1390px;font-size:15.8px">Hex View-1</div>
<svg class="a" style="left:1351px;top:163px" width="16" height="16" viewBox="0 0 16 16"><use href="#win" width="15" height="15"/><path d="M7.5 5l4 2.2v4.4l-4 2.2-4-2.2V7.2z" fill="#eef4ff" stroke="#3a3ac0" stroke-width="1.1"/></svg>
<svg class="a" style="left:1500px;top:165px" width="14" height="14" viewBox="0 0 14 14"><rect x="0" y="0" width="14" height="14" rx="2" fill="#b8b8b8"/><path d="M4 4l6 6M10 4l-6 6" stroke="#fff" stroke-width="1.8"/></svg>
<div class="a" style="left:1537px;top:157px;width:204px;height:28px;background:#f0f0f0;border-top:1px solid #fafafa;border-left:1px solid #f8f8f8;border-right:1px solid #e2e2e2"></div>
<div class="tab" style="left:1599px;font-size:15.4px">Structures</div>
<svg class="a" style="left:1556px;top:163px" width="16" height="16" viewBox="0 0 16 16"><use href="#win" width="15" height="15"/><path d="M5.8 5.2h3.4M5.9 5.2L4.2 12.8M9.1 5.2l1.7 7.6M5.2 12l3.6-3.6" stroke="#0a1a50" stroke-width="1.5" fill="none" stroke-linecap="round"/></svg>
<svg class="a" style="left:1704px;top:165px" width="14" height="14" viewBox="0 0 14 14"><rect x="0" y="0" width="14" height="14" rx="2" fill="#b8b8b8"/><path d="M4 4l6 6M10 4l-6 6" stroke="#fff" stroke-width="1.8"/></svg>
<div class="a" style="left:718px;top:185px;width:207px;height:1px;background:#f4f4f4"></div>
<div class="a" style="left:573px;top:348px;width:1182px;height:23px;background:#e4e4e4"></div>
<div class="ln" style="top:188px">1</div>
<div class="code" style="top:189px">int __cdecl main(int argc, const char **argv, const char **envp)</div>
<div class="ln" style="top:211px">2</div>
<div class="code" style="top:212px">{</div>
<div class="ln" style="top:234px">3</div>
<div class="code" style="top:235px">  unsigned __int64 i; // <span class="l">[rsp+0h] [rbp-50h]</span></div>
<div class="ln" style="top:257px">4</div>
<div class="a" style="left:650px;top:256px;width:22px;height:23px;background:#ffff00"></div>
<div class="code" style="top:258px">  <span class="y">char <span class="hy">fl</span>ag</span>[<span class="y">54</span>]; // <span class="l">[rsp+12h] [rbp-3Eh] BYREF</span></div>
<div class="ln" style="top:280px">5</div>
<div class="code" style="top:281px">  unsigned __int64 v6; // <span class="l">[rsp+48h] [rbp-8h]</span></div>
<div class="ln" style="top:303px">6</div>
<div class="code" style="top:304px"></div>
<div class="ln" style="top:326px">7</div>
<div class="dot" style="top:330px"></div>
<div class="code" style="top:327px">  <span class="l">v6</span> = <span class="b">__readfsqword</span>(0x28u);</div>
<div class="ln" style="top:349px">8</div>
<div class="dot" style="top:353px"></div>
<div class="a" style="left:672px;top:348px;width:22px;height:23px;background:#a0a09c"></div>
<div class="code" style="top:350px">  <span class="b">strcpy</span>(<span class="hg">fl</span><span class="l">ag</span>, <span class="g">"Fkwfdf|krdl~z"</span>);</div>
<div class="ln" style="top:372px">9</div>
<div class="dot" style="top:376px"></div>
<div class="a" style="left:749px;top:371px;width:22px;height:23px;background:#ffff00"></div>
<div class="code" style="top:373px">  <span class="b">printf</span>(<span class="g">"Enter <span class="hy">fl</span>ag: "</span>);</div>
<div class="ln" style="top:395px">10</div>
<div class="dot" style="top:399px"></div>
<div class="a" style="left:606px;top:394px;width:22px;height:23px;background:#ffff00"></div>
<div class="code" style="top:396px">  <span class="b">f<span class="hy">fl</span>ush</span>(_bss_start);</div>
<div class="ln" style="top:418px">11</div>
<div class="dot" style="top:422px"></div>
<div class="a" style="left:859px;top:417px;width:22px;height:23px;background:#ffff00"></div>
<div class="code" style="top:419px">  <span class="b">__isoc99_scanf</span>(<span class="g">"%31s"</span>, &amp;<span class="l"><span class="hy">fl</span>ag</span>[14]);</div>
<div class="ln" style="top:441px">12</div>
<div class="dot" style="top:445px"></div>
<div class="a" style="left:738px;top:440px;width:22px;height:23px;background:#ffff00"></div>
<div class="code" style="top:442px">  if ( <span class="b">strlen</span>(&amp;<span class="l"><span class="hy">fl</span>ag</span>[14]) == 13 )</div>
<div class="ln" style="top:464px">13</div>
<div class="code" style="top:465px">  {</div>
<div class="ln" style="top:487px">14</div>
<div class="dot" style="top:491px"></div>
<div class="code" style="top:488px">    for ( <span class="l">i</span> = 0LL; <span class="l">i</span> &lt; 0xD; ++<span class="l">i</span> )</div>
<div class="ln" style="top:510px">15</div>
<div class="code" style="top:511px">    {</div>
<div class="ln" style="top:533px">16</div>
<div class="dot" style="top:537px"></div>
<div class="a" style="left:892px;top:532px;width:22px;height:23px;background:#ffff00"></div>
<div class="a" style="left:1123px;top:532px;width:22px;height:23px;background:#ffff00"></div>
<div class="code" style="top:534px">      if ( ((<span class="y">unsigned __int8</span>)<span class="l"><span class="hy">fl</span>ag</span>[<span class="l">i</span> + 14] ^ 7) != <span class="l"><span class="hy">fl</span>ag</span>[<span class="l">i</span>] )</div>
<div class="ln" style="top:556px">17</div>
<div class="code" style="top:557px">      {</div>
<div class="ln" style="top:579px">18</div>
<div class="dot" style="top:583px"></div>
<div class="code" style="top:580px">        <span class="b">printf</span>(<span class="g">"Wrong at index %zu\n"</span>, <span class="l">i</span>);</div>
<div class="ln" style="top:602px">19</div>
<div class="dot" style="top:606px"></div>
<div class="code" style="top:603px">        return 1;</div>
<div class="ln" style="top:625px">20</div>
<div class="code" style="top:626px">      }</div>
<div class="ln" style="top:648px">21</div>
<div class="code" style="top:649px">    }</div>
<div class="ln" style="top:671px">22</div>
<div class="dot" style="top:675px"></div>
<div class="code" style="top:672px">    <span class="b">puts</span>(<span class="g">"Correct"</span>);</div>
<div class="ln" style="top:694px">23</div>
<div class="dot" style="top:698px"></div>
<div class="code" style="top:695px">    return 0;</div>
<div class="ln" style="top:717px">24</div>
<div class="code" style="top:718px">  }</div>
<div class="ln" style="top:740px">25</div>
<div class="code" style="top:741px">  else</div>
<div class="ln" style="top:763px">26</div>
<div class="code" style="top:764px">  {</div>
<div class="ln" style="top:786px">27</div>
<div class="dot" style="top:790px"></div>
<div class="code" style="top:787px">    <span class="b">puts</span>(<span class="g">"Wrong length"</span>);</div>
<div class="ln" style="top:809px">28</div>
<div class="dot" style="top:813px"></div>
<div class="code" style="top:810px">    return 1;</div>
<div class="ln" style="top:832px">29</div>
<div class="code" style="top:833px">  }</div>
<div class="ln" style="top:855px">30</div>
<div class="dot" style="top:859px"></div>
<div class="code" style="top:856px">}</div>
</body></html>
